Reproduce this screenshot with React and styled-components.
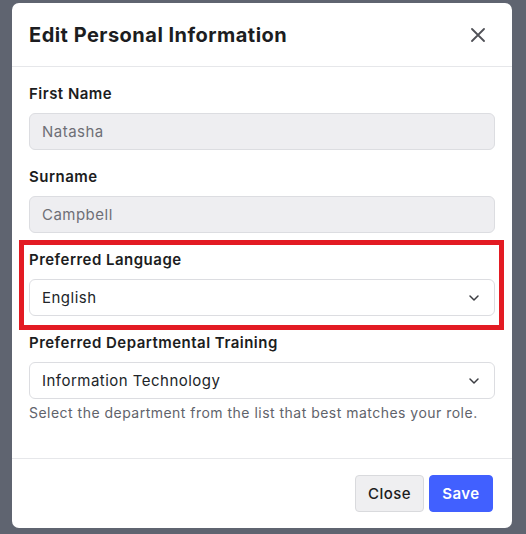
import styled, { createGlobalStyle } from "styled-components";

const GlobalStyle = createGlobalStyle`
	* { box-sizing: border-box; }
	body {
		margin: 0;
		background: #5f6470;
		font-family: "Inter", "Open Sans", sans-serif;
		letter-spacing: 0.03em;
		color: #212529;
	}
`;

const Backdrop = styled.div`
	width: 526px;
	height: 534px;
	padding: 3px 0 0 12px;
	overflow: hidden;
`;

const Modal = styled.div`
	width: 500px;
	background: #fff;
	border-radius: 7px;
	display: flex;
	flex-direction: column;
`;

const Header = styled.div`
	display: flex;
	align-items: center;
	justify-content: space-between;
	height: 64px;
	padding: 0 16px 0 17px;
	border-bottom: 1px solid #e6e7ea;
`;

const Title = styled.h5`
	margin: 0;
	font-size: 20px;
	font-weight: 700;
	color: #1c1d21;
`;

const CloseX = styled.button`
	width: 30px;
	height: 30px;
	border: 0;
	background: none;
	padding: 0;
	display: flex;
	align-items: center;
	justify-content: center;
	margin-right: 3px;
	cursor: pointer;
`;

const Body = styled.div`
	padding: 16px 17px 35px;
	display: flex;
	flex-direction: column;
	gap: 16px;
`;

const Field = styled.div`
	position: relative;
	display: flex;
	flex-direction: column;

	${(p) =>
		p.$highlight &&
		`
		&::after {
			content: "";
			position: absolute;
			top: -9px;
			left: -10px;
			right: -9px;
			bottom: -14px;
			border: 5px solid #e31b23;
			pointer-events: none;
		}
	`}
`;

const Label = styled.label`
	font-size: 15px;
	font-weight: 600;
	line-height: 22px;
	margin-bottom: 8px;
	color: #1c1d21;
`;

const Input = styled.div`
	height: 37px;
	border: 1px solid #dcdde1;
	border-radius: 6px;
	background: ${(p) => (p.$disabled ? "#eeeef1" : "#fff")};
	color: ${(p) => (p.$disabled ? "#6e6f76" : "#212529")};
	font-size: 15px;
	padding: 0 12px 0 12px;
	display: flex;
	align-items: center;
	justify-content: space-between;
`;

const Help = styled.div`
	margin-top: 4px;
	font-size: 14px;
	line-height: 20px;
	color: #5f636b;
`;

const Footer = styled.div`
	display: flex;
	justify-content: flex-end;
	gap: 5px;
	padding: 16px 19px 16px;
	border-top: 1px solid #e6e7ea;
`;

const Button = styled.button`
	height: 37px;
	width: ${(p) => (p.$primary ? "64px" : "69px")};
	padding: 0;
	border-radius: 4px;
	border: 1px solid ${(p) => (p.$primary ? "#4160ff" : "#d9dadd")};
	background: ${(p) => (p.$primary ? "#4160ff" : "#efeff1")};
	color: ${(p) => (p.$primary ? "#fff" : "#1c1d21")};
	font-family: inherit;
	letter-spacing: inherit;
	font-size: 15px;
	font-weight: ${(p) => (p.$primary ? 600 : 500)};
	cursor: pointer;
`;

const Chevron = () => (
	<svg width="12" height="8" viewBox="0 0 12 8" fill="none" style={{ marginRight: 2 }}>
		<path d="M2 2 6 6l4-4" stroke="#3c3d42" strokeWidth="1.5" strokeLinecap="round" strokeLinejoin="round" />
	</svg>
);

const App = () => {
	return (
		<Backdrop>
			<GlobalStyle />
			<Modal>
				<Header>
					<Title>Edit Personal Information</Title>
					<CloseX aria-label="Close">
						<svg width="14" height="14" viewBox="0 0 14 14">
							<path d="M1 1l12 12M13 1 1 13" stroke="#505157" strokeWidth="1.8" strokeLinecap="round" />
						</svg>
					</CloseX>
				</Header>
				<Body>
					<Field>
						<Label>First Name</Label>
						<Input $disabled>Natasha</Input>
					</Field>
					<Field>
						<Label>Surname</Label>
						<Input $disabled>Campbell</Input>
					</Field>
					<Field $highlight>
						<Label>Preferred Language</Label>
						<Input>
							English
							<Chevron />
						</Input>
					</Field>
					<Field>
						<Label>Preferred Departmental Training</Label>
						<Input>
							Information Technology
							<Chevron />
						</Input>
						<Help>Select the department from the list that best matches your role.</Help>
					</Field>
				</Body>
				<Footer>
					<Button>Close</Button>
					<Button $primary>Save</Button>
				</Footer>
			</Modal>
		</Backdrop>
	);
};

export default App;
